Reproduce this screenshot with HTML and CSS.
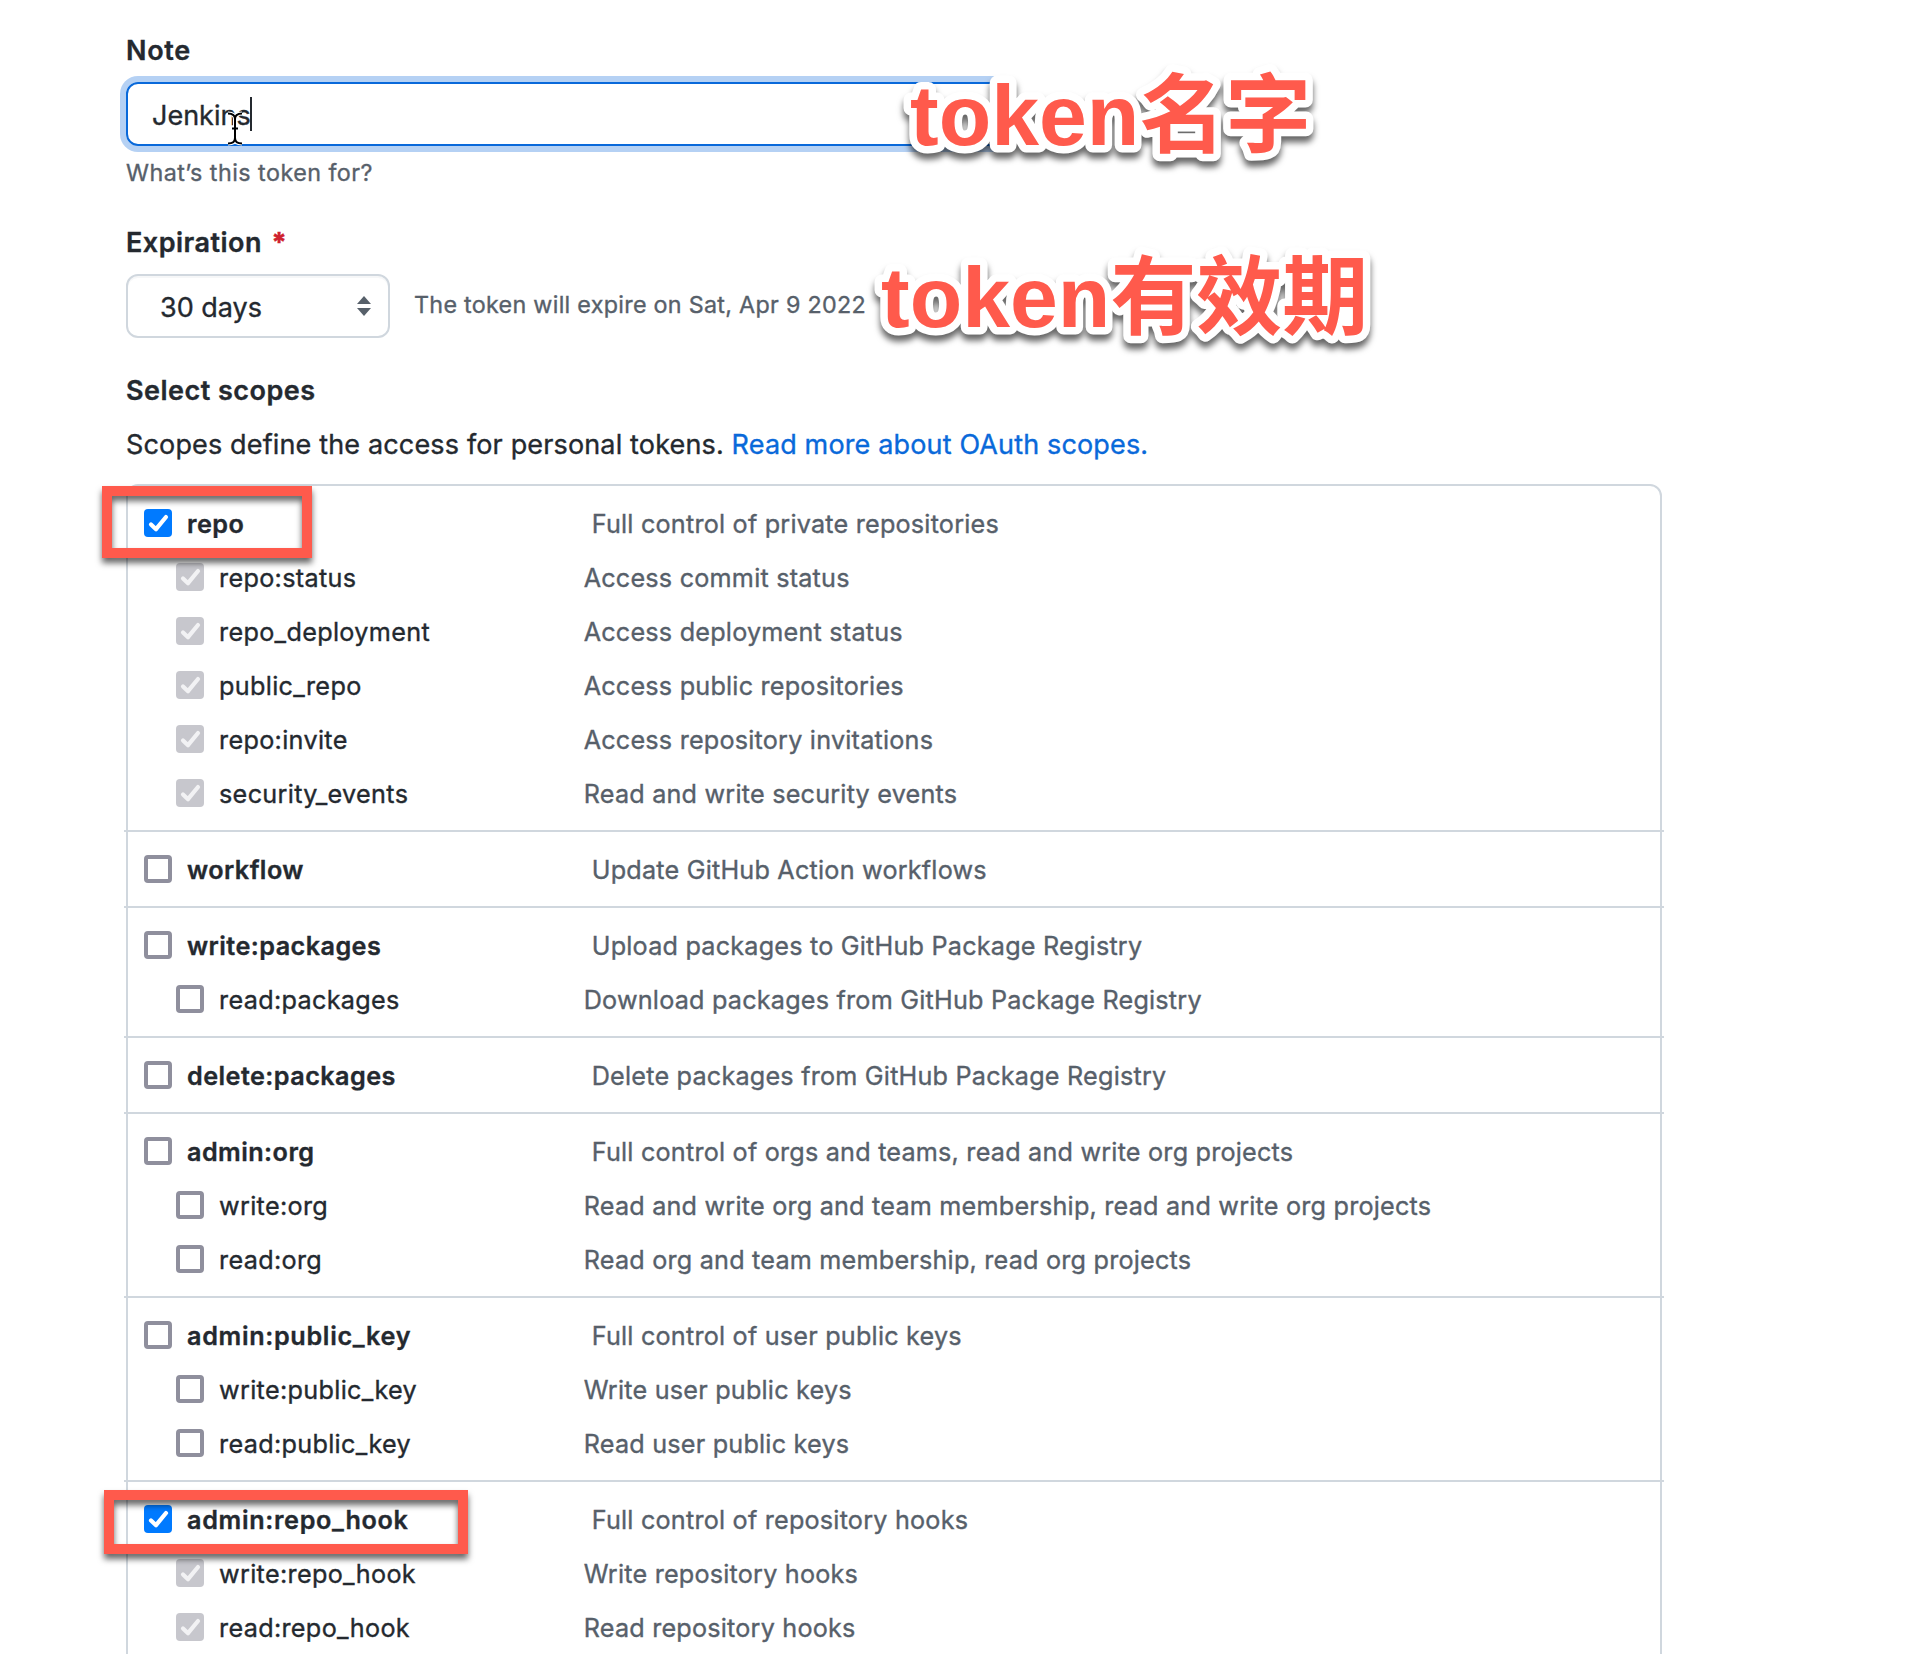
FILE: index.html
```html
<!DOCTYPE html>
<html lang="en">
<head>
<meta charset="utf-8">
<title>New personal access token</title>
<link rel="stylesheet" href="styles.css">
</head>
<body>
<svg class="defs" aria-hidden="true">
  <symbol id="check" viewBox="0 0 28 28"><path d="M7 15.400l5 4.800L22 8" fill="none" stroke="currentColor" stroke-width="4.200" stroke-linecap="round" stroke-linejoin="round"/></symbol>
  <symbol id="beam" viewBox="0 0 18 35"><path d="M2 2.500C6 2.500 9 4 9 8V27C9 31 6 32.500 2 32.500M16 2.500C12 2.500 9 4 9 8M16 32.500C12 32.500 9 31 9 27M6 17.500H12" fill="none" stroke="currentColor"/></symbol>
</svg>
<main class="page">
  <section class="field">
    <h2 class="label label-note">Note</h2>
    <div class="input"><span class="value">Jenkins</span><i class="caret"></i>
      <svg class="ibeam" width="18" height="35"><use class="halo" href="#beam"/><use class="core" href="#beam"/></svg>
    </div>
    <p class="hint">What’s this token for?</p>
  </section>
  <section class="field">
    <h2 class="label label-exp">Expiration <b class="required">*</b></h2>
    <div class="expiry">
      <div class="select"><span>30 days</span>
        <svg width="14" height="20" viewBox="0 0 14 20"><path d="M7 0l7 8H0zM7 20l7-8H0z" fill="#57606a"/></svg>
      </div>
      <p class="expires">The token will expire on Sat, Apr 9 2022</p>
    </div>
  </section>
  <h2 class="label label-scopes">Select scopes</h2>
  <p class="intro">Scopes define the access for personal tokens. <a>Read more about OAuth scopes.</a></p>

  <div class="scopes">
    <ul class="group">
      <li class="row parent"><i class="box on"><svg><use href="#check"/></svg></i><span class="name">repo</span><span class="desc">Full control of private repositories</span></li>
      <li class="row"><i class="box off"><svg><use href="#check"/></svg></i><span class="name">repo:status</span><span class="desc">Access commit status</span></li>
      <li class="row"><i class="box off"><svg><use href="#check"/></svg></i><span class="name">repo_deployment</span><span class="desc">Access deployment status</span></li>
      <li class="row"><i class="box off"><svg><use href="#check"/></svg></i><span class="name">public_repo</span><span class="desc">Access public repositories</span></li>
      <li class="row"><i class="box off"><svg><use href="#check"/></svg></i><span class="name">repo:invite</span><span class="desc">Access repository invitations</span></li>
      <li class="row"><i class="box off"><svg><use href="#check"/></svg></i><span class="name">security_events</span><span class="desc">Read and write security events</span></li>
    </ul>
    <ul class="group">
      <li class="row parent"><i class="box"></i><span class="name">workflow</span><span class="desc">Update GitHub Action workflows</span></li>
    </ul>
    <ul class="group">
      <li class="row parent"><i class="box"></i><span class="name">write:packages</span><span class="desc">Upload packages to GitHub Package Registry</span></li>
      <li class="row"><i class="box"></i><span class="name">read:packages</span><span class="desc">Download packages from GitHub Package Registry</span></li>
    </ul>
    <ul class="group">
      <li class="row parent"><i class="box"></i><span class="name">delete:packages</span><span class="desc">Delete packages from GitHub Package Registry</span></li>
    </ul>
    <ul class="group">
      <li class="row parent"><i class="box"></i><span class="name">admin:org</span><span class="desc">Full control of orgs and teams, read and write org projects</span></li>
      <li class="row"><i class="box"></i><span class="name">write:org</span><span class="desc">Read and write org and team membership, read and write org projects</span></li>
      <li class="row"><i class="box"></i><span class="name">read:org</span><span class="desc">Read org and team membership, read org projects</span></li>
    </ul>
    <ul class="group">
      <li class="row parent"><i class="box"></i><span class="name wide">admin:public_key</span><span class="desc">Full control of user public keys</span></li>
      <li class="row"><i class="box"></i><span class="name">write:public_key</span><span class="desc">Write user public keys</span></li>
      <li class="row"><i class="box"></i><span class="name">read:public_key</span><span class="desc">Read user public keys</span></li>
    </ul>
    <ul class="group">
      <li class="row parent"><i class="box on"><svg><use href="#check"/></svg></i><span class="name wide">admin:repo_hook</span><span class="desc">Full control of repository hooks</span></li>
      <li class="row"><i class="box off"><svg><use href="#check"/></svg></i><span class="name">write:repo_hook</span><span class="desc">Write repository hooks</span></li>
      <li class="row"><i class="box off"><svg><use href="#check"/></svg></i><span class="name">read:repo_hook</span><span class="desc">Read repository hooks</span></li>
    </ul>
  </div>

  <div class="mark mark-repo"></div>
  <div class="mark mark-hook"></div>
  <svg class="callout callout-name" width="440" height="120"><text x="20" y="85">token<tspan dy="1">名字</tspan></text></svg>
  <svg class="callout callout-expiry" width="520" height="120"><text x="20" y="85">token<tspan dy="1">有效期</tspan></text></svg>
</main>
</body>
</html>
```
FILE: styles.css
```css
* { box-sizing: border-box; }
body {
  margin: 0;
  background: #fff;
  color: #24292f;
  font-family: Inter, "Noto Sans CJK SC", sans-serif;
  font-size: 27px;
  line-height: 42px;
  -webkit-text-stroke: .35px;
}
h2, p, ul { margin: 0; padding: 0; list-style: none; font-weight: 400; }
.defs { position: absolute; width: 0; height: 0; }
.page {
  position: relative;
  width: 1912px;
  height: 1654px;
  overflow: hidden;
  padding: 30px 250px 0 126px;
}
.label { font-size: 27px; line-height: 42px; font-weight: 600; letter-spacing: .48px; }
.label-note { letter-spacing: .7px; }
.input {
  position: relative;
  display: flex;
  align-items: center;
  width: 880px;
  height: 64px;
  margin-top: 10px;
  padding: 3px 24px 0;
  border: 2px solid #0969da;
  border-radius: 12px;
  box-shadow: 0 0 0 6px #b5d1f4;
}
.caret { width: 2px; height: 34px; margin: -4px 0 0 -1px; background: #24292f; }
.ibeam { position: absolute; left: 98px; top: 27px; }
.halo { color: #fff; stroke-width: 4px; }
.core { color: #000; stroke-width: 2px; }
.hint { margin-top: 9px; font-size: 23.300px; line-height: 36px; letter-spacing: .47px; color: #57606a; }
.label-exp { margin-top: 31px; }
.required { margin-left: 2px; color: #cf222e; font-weight: 800; }
.expiry { display: flex; align-items: center; gap: 24px; margin-top: 10px; }
.select {
  display: flex;
  align-items: center;
  justify-content: space-between;
  width: 264px;
  height: 64px;
  padding: 0 17px 0 32px;
  border: 2px solid #d0d7de;
  border-radius: 12px;
  box-shadow: inset 0 2px 0 rgba(208, 215, 222, .2);
}
.select span { padding-top: 3px; }
.expires { padding-bottom: 2px; font-size: 23.300px; line-height: 36px; letter-spacing: .29px; color: #57606a; }
.label-scopes { margin-top: 32px; }
.intro { margin-top: 12px; letter-spacing: .15px; }
.intro a { color: #0969da; }
.scopes {
  height: 1300px;
  width: 1536px;
  margin-top: 18px;
  border: 2px solid #d0d7de;
  border-radius: 12px;
}
.group { padding: 10px 0 10px 16px; }
.group + .group { margin: 0 -4px; padding-left: 20px; padding-right: 4px; border-top: 2px solid #d0d7de; }
.row { display: flex; align-items: center; height: 54px; padding-left: 32px; font-size: 25.200px; white-space: nowrap; }
.parent { padding-left: 0; }
.box { flex: none; display: block; width: 28px; height: 28px; border: 4px solid #8f8f9d; border-radius: 4px; margin-right: 15px; }
.box svg { display: block; width: 28px; height: 28px; }
.on { border: 0; background: #007aff; color: #fff; }
.off { border: 0; background: #c7c7cd; color: #f2f2f4; }
.name { width: 364.700px; padding-top: 2px; letter-spacing: .33px; }
.parent .name { width: 404.700px; font-weight: 600; letter-spacing: .45px; }
.parent .wide { letter-spacing: .68px; }
.desc { padding-top: 2px; letter-spacing: .21px; color: #57606a; }
.mark {
  position: absolute;
  border: 10px solid #ff5a4c;
  filter: drop-shadow(0 5px 3px rgba(0, 0, 0, .6));
}
.mark-repo { left: 102px; top: 486px; width: 210px; height: 72px; }
.mark-hook { left: 104px; top: 1490px; width: 364px; height: 64px; }
.callout { position: absolute; overflow: visible; filter: drop-shadow(0 6px 3px rgba(0, 0, 0, .6)); }
.callout text {
  font: 700 86px "Liberation Sans", "Noto Sans CJK SC", sans-serif;
  fill: #ff5a4c;
  stroke: #fff;
  stroke-width: 15px;
  stroke-linejoin: round;
  paint-order: stroke;
}
.callout-name { left: 890px; top: 60px; }
.callout-expiry { left: 861px; top: 242px; }
```
